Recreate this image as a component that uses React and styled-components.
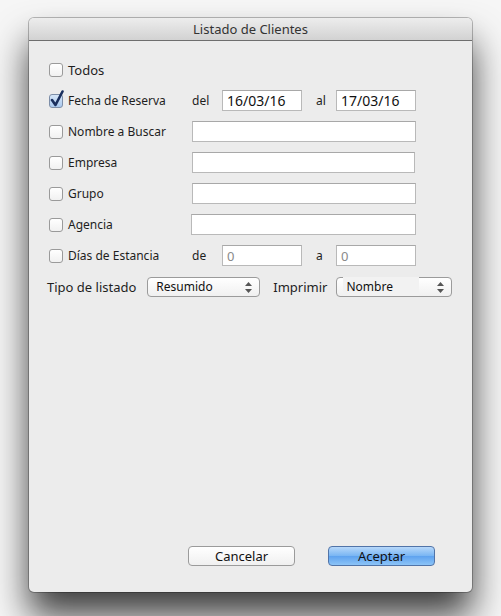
import * as React from "react";
import styled, { createGlobalStyle } from "styled-components";

const GlobalStyle = createGlobalStyle`
  html, body {
    margin: 0;
    padding: 0;
    background: #f6f6f6;
    height: 616px;
    overflow: hidden;
  }
  body {
    font-family: "Noto Sans", "DejaVu Sans", sans-serif;
  }
`;

const Window = styled.div`
  margin: 18px 0 0 29px;
  width: 443px;
  height: 574px;
  background: #ececec;
  border-radius: 5px;
  box-shadow: 0 0 0 1px rgba(0, 0, 0, 0.25), 0 24px 36px rgba(0, 0, 0, 0.75);
  display: flex;
  flex-direction: column;
  overflow: hidden;
`;

const TitleBar = styled.div`
  height: 22px;
  flex: none;
  background: linear-gradient(#ededed, #d2d2d2);
  border-bottom: 1px solid #6e6e6e;
  display: flex;
  align-items: center;
  justify-content: center;
  font-size: 13px;
  color: #333;
`;

const Body = styled.div`
  flex: 1;
  display: flex;
  flex-direction: column;
  padding: 13px 0 26px 20px;
`;

const Row = styled.div`
  height: 31px;
  display: flex;
  align-items: center;
`;

const CheckCell = styled.label`
  width: 143px;
  flex: none;
  display: flex;
  align-items: center;
  gap: 5px;
  color: #1e1e1e;
  font-size: ${(p) => (p.$big ? "13px" : "12px")};
`;

const Box = styled.span`
  position: relative;
  width: 12px;
  height: 12px;
  border: 1px solid ${(p) => (p.$on ? "#7d8ea8" : "#9a9a9a")};
  border-radius: 3px;
  background: ${(p) =>
    p.$on
      ? "linear-gradient(#d6e6f8, #a9c8ee)"
      : "linear-gradient(#ffffff, #f1f1f1)"};
  flex: none;
`;

const Tick = styled.svg`
  position: absolute;
  left: 0px;
  top: -5px;
`;

const Small = styled.span`
  font-size: 12px;
  color: #1e1e1e;
  width: ${(p) => p.$w}px;
  flex: none;
  padding-left: ${(p) => p.$pl || 0}px;
  box-sizing: border-box;
`;

const Field = styled.div`
  width: ${(p) => p.$w}px;
  height: 21px;
  box-sizing: border-box;
  background: #fff;
  border: 1px solid #b9b9b9;
  border-top-color: #a8a8a8;
  display: flex;
  align-items: center;
  padding-left: 4px;
  font-size: ${(p) => (p.$dim ? "13px" : "14px")};
  color: ${(p) => (p.$dim ? "#8a8a8a" : "#111")};
  margin-left: ${(p) => p.$ml || 0}px;
`;

const ListRow = styled.div`
  height: 31px;
  display: flex;
  align-items: center;
  margin-left: -2px;
`;

const Label = styled.span`
  font-size: 13px;
  color: #1e1e1e;
  margin-right: ${(p) => p.$mr}px;
`;

const Select = styled.div`
  position: relative;
  width: ${(p) => p.$w}px;
  height: 20px;
  box-sizing: border-box;
  border: 1px solid #9b9b9b;
  border-radius: 4px;
  background: linear-gradient(#ffffff, #f0f0f0);
  display: flex;
  align-items: center;
  padding-left: 8px;
  font-size: 12px;
  color: #111;
  margin-right: ${(p) => p.$mr || 0}px;
`;

const Inner = styled.span`
  background: #f2f2f2;
  margin-left: -2px;
  padding: 1px 26px 1px 3px;
`;

const Arrows = styled.svg`
  position: absolute;
  right: 7px;
  top: 4px;
`;

const Footer = styled.div`
  margin-top: auto;
  display: flex;
  justify-content: flex-end;
  gap: 33px;
  padding-right: 37px;
`;

const Button = styled.button`
  width: 107px;
  height: 20px;
  border-radius: 4px;
  font-family: inherit;
  font-size: 13px;
  color: #111;
  padding: 0;
  border: 1px solid ${(p) => (p.$primary ? "#5174a8" : "#9b9b9b")};
  background: ${(p) =>
    p.$primary
      ? "linear-gradient(#b7d8fa, #78b5f3 50%, #5ea2ef 51%, #8cc4f7)"
      : "linear-gradient(#ffffff, #f0f0f0)"};
`;

const Check = ({ checked, children, big }) => (
  <CheckCell $big={big}>
    <Box $on={checked}>
      {checked && (
        <Tick width="14" height="17" viewBox="0 0 14 17">
          <path
            d="M2 10 L5.5 15 L12.5 1.5"
            fill="none"
            stroke="#1a2f5e"
            strokeWidth="2.6"
            strokeLinecap="round"
            strokeLinejoin="round"
          />
        </Tick>
      )}
    </Box>
    {children}
  </CheckCell>
);

const Updown = () => (
  <Arrows width="7" height="11" viewBox="0 0 7 11">
    <path d="M3.5 0 L7 4 L0 4 Z M3.5 11 L7 7 L0 7 Z" fill="#555" />
  </Arrows>
);

export default function App() {
  return (
    <>
      <GlobalStyle />
      <Window>
        <TitleBar>Listado de Clientes</TitleBar>
        <Body>
          <Row>
            <Check big>Todos</Check>
          </Row>
          <Row>
            <Check checked>Fecha de Reserva</Check>
            <Small $w={30}>del</Small>
            <Field $w={80}>16/03/16</Field>
            <Small $w={34} $pl={14}>al</Small>
            <Field $w={80}>17/03/16</Field>
          </Row>
          <Row>
            <Check>Nombre a Buscar</Check>
            <Field $w={224} />
          </Row>
          <Row>
            <Check>Empresa</Check>
            <Field $w={223} />
          </Row>
          <Row>
            <Check>Grupo</Check>
            <Field $w={224} />
          </Row>
          <Row>
            <Check>Agencia</Check>
            <Field $w={225} $ml={-1} />
          </Row>
          <Row>
            <Check>Días de Estancia</Check>
            <Small $w={30}>de</Small>
            <Field $w={80} $dim>0</Field>
            <Small $w={34} $pl={14}>a</Small>
            <Field $w={80} $dim>0</Field>
          </Row>
          <ListRow>
            <Label $mr={11}>Tipo de listado</Label>
            <Select $w={113} $mr={13}>
              Resumido
              <Updown />
            </Select>
            <Label $mr={9}>Imprimir</Label>
            <Select $w={116}>
              <Inner>Nombre</Inner>
              <Updown />
            </Select>
          </ListRow>
          <Footer>
            <Button>Cancelar</Button>
            <Button $primary>Aceptar</Button>
          </Footer>
        </Body>
      </Window>
    </>
  );
}
